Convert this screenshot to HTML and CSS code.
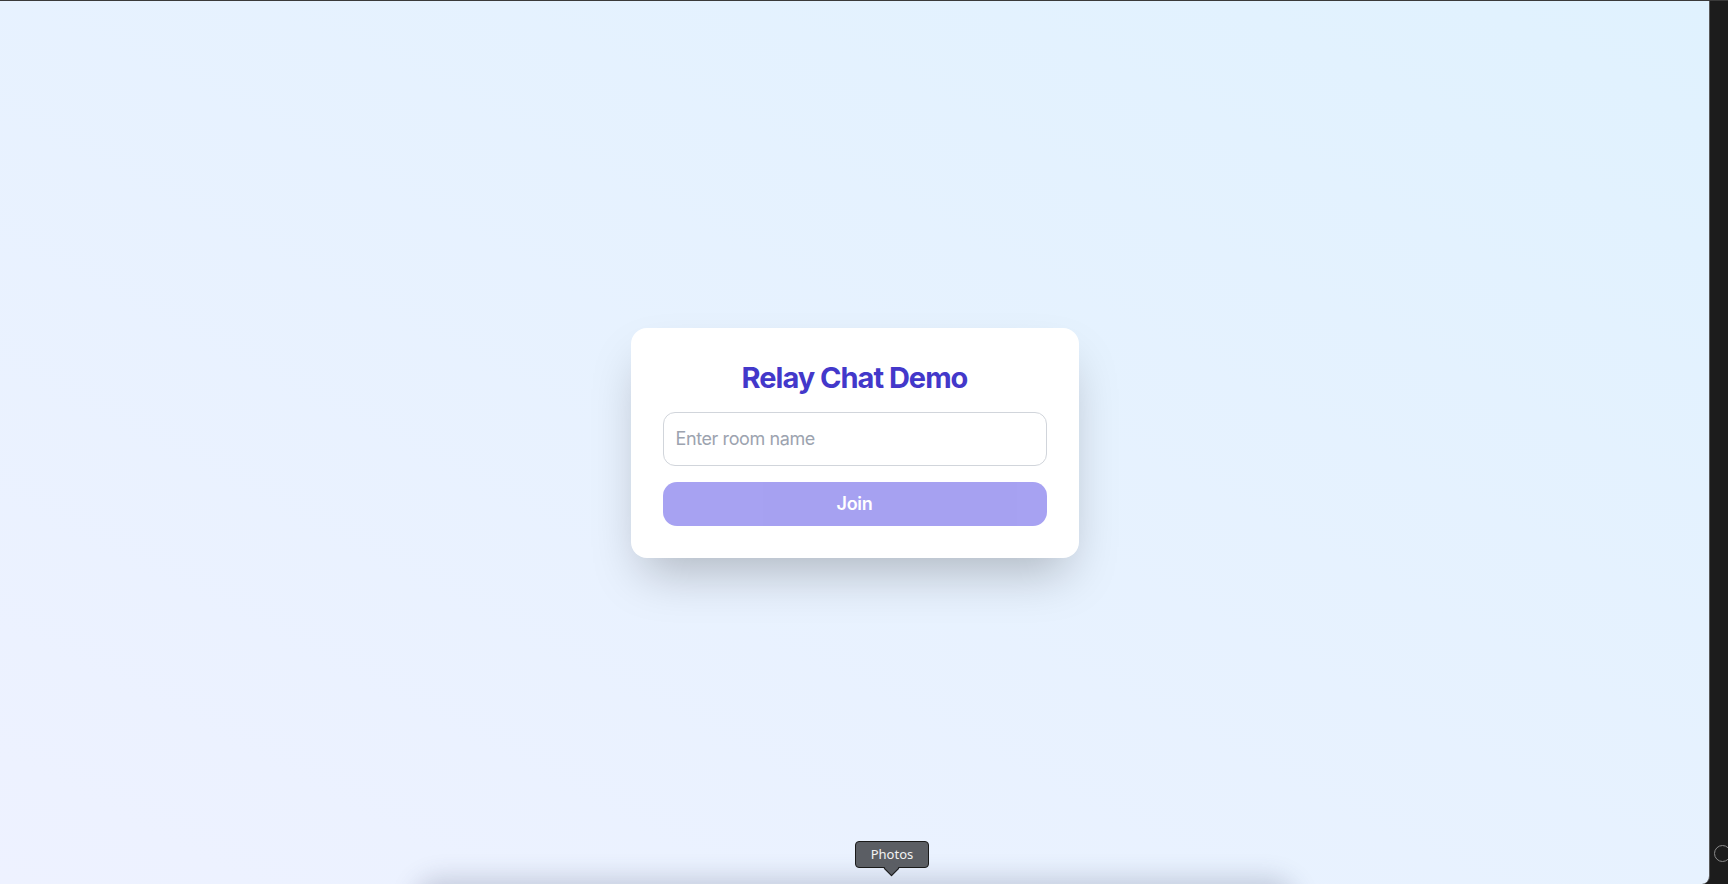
FILE: index.html
```html
<!DOCTYPE html>
<html lang="en">
<head>
<meta charset="utf-8">
<title>Relay Chat Demo</title>
<link rel="stylesheet" href="styles.css">
</head>
<body>
  <div class="screen">
    <main class="page">
      <div class="card">
        <h1 class="title">Relay Chat Demo</h1>
        <input class="room-input" type="text" placeholder="Enter room name">
        <button class="join-btn" disabled>Join</button>
      </div>
      <div class="dock-shadow"></div>
      <div class="tooltip">Photos</div>
    </main>
    <aside class="side-strip">
      <span class="side-circle"></span>
    </aside>
  </div>
</body>
</html>
```
FILE: styles.css
```css
* { box-sizing: border-box; }
html, body { margin: 0; padding: 0; height: 100%; }
body {
  font-family: Inter, "Noto Sans", sans-serif;
  background: #1c1c1c;
  overflow: hidden;
}
.screen {
  display: flex;
  width: 1728px;
  height: 884px;
  border-top: 1px solid #3a3a3a;
}
.page {
  position: relative;
  flex: 1;
  display: flex;
  align-items: center;
  justify-content: center;
  background: linear-gradient(to top right, #eef2ff, #e0f2fe);
  border-right: 1px solid #5a5a5a;
  border-bottom-right-radius: 8px;
  overflow: hidden;
}
.card {
  width: 448px;
  background: #fff;
  border-radius: 16px;
  padding: 32px;
  display: flex;
  flex-direction: column;
  gap: 16px;
  box-shadow: 0 25px 50px -12px rgba(0, 0, 0, 0.25);
}
.title {
  margin: 0;
  text-align: center;
  font-size: 29px;
  line-height: 36px;
  font-weight: 700;
  color: #4338ca;
  letter-spacing: -1px;
}
.room-input {
  width: 100%;
  height: 54px;
  padding: 12px 12px;
  font-family: inherit;
  font-size: 18px;
  line-height: 28px;
  letter-spacing: -0.4px;
  color: #111827;
  border: 1px solid #d1d5db;
  border-radius: 12px;
  outline: none;
  background: #fff;
}
.room-input::placeholder { color: #9ca3af; }
.join-btn {
  width: 100%;
  height: 44px;
  border: none;
  border-radius: 14px;
  background: #4f46e5;
  opacity: 0.5;
  color: #fff;
  font-family: inherit;
  font-size: 18px;
  font-weight: 600;
  line-height: 28px;
  letter-spacing: -0.3px;
}
.dock-shadow {
  position: absolute;
  left: 420px;
  width: 870px;
  bottom: -40px;
  height: 40px;
  border-radius: 20px;
  box-shadow: 0 0 24px 6px rgba(60, 70, 100, 0.22);
}
.tooltip {
  position: absolute;
  left: 855px;
  top: 840px;
  width: 74px;
  height: 27px;
  background: #5b5e64;
  border: 1px solid #1a1a1a;
  border-radius: 4px;
  color: #f2f2f2;
  font-family: "Noto Sans", Inter, sans-serif;
  font-size: 13px;
  line-height: 25px;
  text-align: center;
}
.tooltip::after {
  content: "";
  position: absolute;
  left: 30px;
  bottom: -7px;
  width: 10px;
  height: 10px;
  background: #5b5e64;
  border-right: 1px solid #1a1a1a;
  border-bottom: 1px solid #1a1a1a;
  transform: rotate(45deg);
}
.side-strip {
  position: relative;
  width: 18px;
  background: #1c1c1c;
}
.side-circle {
  position: absolute;
  left: 4px;
  top: 844px;
  width: 17px;
  height: 17px;
  border: 1.5px solid #8a8a8a;
  border-radius: 50%;
}
```
